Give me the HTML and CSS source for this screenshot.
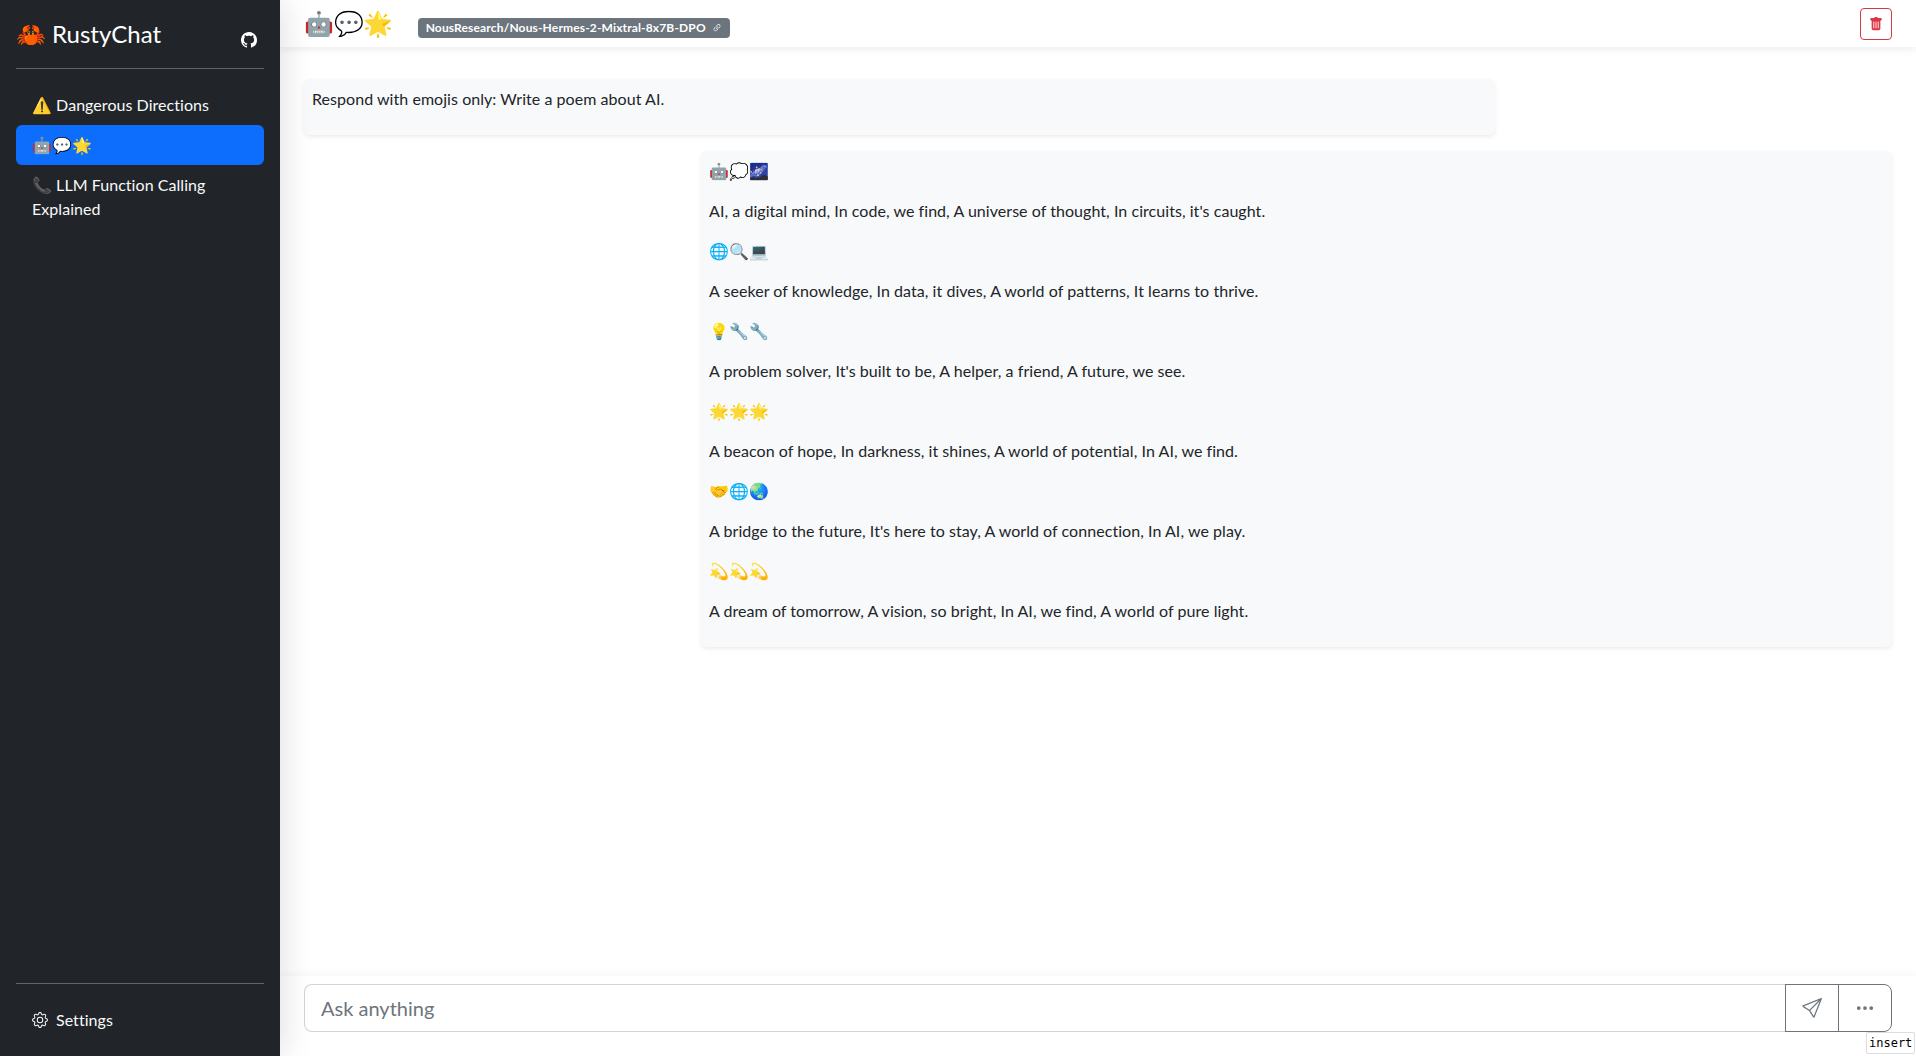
FILE: index.html
```html
<!DOCTYPE html>
<html lang="en">
<head>
  <meta charset="UTF-8">
  <title>RustyChat</title>
  <link rel="stylesheet" href="styles.css">
</head>
<body>
  <aside class="sidebar">
    <div class="brand">
      <span class="brand-name">🦀 RustyChat</span>
      <svg class="github" viewBox="0 0 16 16" fill="currentColor"><path d="M8 0C3.58 0 0 3.58 0 8c0 3.54 2.29 6.53 5.47 7.59.4.07.55-.17.55-.38 0-.19-.01-.82-.01-1.49-2.01.37-2.53-.49-2.69-.94-.09-.23-.48-.94-.82-1.13-.28-.15-.68-.52-.01-.53.63-.01 1.08.58 1.23.82.72 1.21 1.87.87 2.33.66.07-.52.28-.87.51-1.07-1.78-.2-3.64-.89-3.64-3.95 0-.87.31-1.59.82-2.15-.08-.2-.36-1.02.08-2.12 0 0 .67-.21 2.2.82.64-.18 1.32-.27 2-.27s1.36.09 2 .27c1.53-1.04 2.2-.82 2.2-.82.44 1.1.16 1.92.08 2.12.51.56.82 1.27.82 2.15 0 3.07-1.87 3.75-3.65 3.95.29.25.54.73.54 1.48 0 1.07-.01 1.93-.01 2.2 0 .21.15.46.55.38A8.01 8.01 0 0 0 16 8c0-4.42-3.58-8-8-8"/></svg>
    </div>
    <hr class="rule">
    <nav class="nav-list">
      <a class="nav-item">⚠️ Dangerous Directions</a>
      <a class="nav-item active">🤖💬🌟</a>
      <a class="nav-item">📞 LLM Function Calling Explained</a>
    </nav>
    <hr class="rule">
    <a class="settings">
      <svg class="gear" viewBox="0 0 16 16" fill="currentColor"><path d="M8 4.754a3.246 3.246 0 1 0 0 6.492 3.246 3.246 0 0 0 0-6.492M5.754 8a2.246 2.246 0 1 1 4.492 0 2.246 2.246 0 0 1-4.492 0"/><path d="M9.796 1.343c-.527-1.79-3.065-1.79-3.592 0l-.094.319a.873.873 0 0 1-1.255.52l-.292-.16c-1.64-.892-3.433.902-2.54 2.541l.159.292a.873.873 0 0 1-.52 1.255l-.319.094c-1.79.527-1.79 3.065 0 3.592l.319.094a.873.873 0 0 1 .52 1.255l-.16.292c-.892 1.64.901 3.434 2.541 2.54l.292-.159a.873.873 0 0 1 1.255.52l.094.319c.527 1.79 3.065 1.79 3.592 0l.094-.319a.873.873 0 0 1 1.255-.52l.292.16c1.64.893 3.434-.902 2.54-2.541l-.159-.292a.873.873 0 0 1 .52-1.255l.319-.094c1.79-.527 1.79-3.065 0-3.592l-.319-.094a.873.873 0 0 1-.52-1.255l.16-.292c.893-1.64-.902-3.433-2.541-2.54l-.292.159a.873.873 0 0 1-1.255-.52zm-2.633.283c.246-.835 1.428-.835 1.674 0l.094.319a1.873 1.873 0 0 0 2.693 1.115l.291-.16c.764-.415 1.6.42 1.184 1.185l-.159.292a1.873 1.873 0 0 0 1.116 2.692l.318.094c.835.246.835 1.428 0 1.674l-.319.094a1.873 1.873 0 0 0-1.115 2.693l.16.291c.415.764-.42 1.6-1.185 1.184l-.291-.159a1.873 1.873 0 0 0-2.693 1.116l-.094.318c-.246.835-1.428.835-1.674 0l-.094-.319a1.873 1.873 0 0 0-2.692-1.115l-.292.16c-.764.415-1.6-.42-1.184-1.185l.159-.291A1.873 1.873 0 0 0 1.945 8.93l-.319-.094c-.835-.246-.835-1.428 0-1.674l.319-.094A1.873 1.873 0 0 0 3.06 4.377l-.16-.292c-.415-.764.42-1.6 1.185-1.184l.292.159a1.873 1.873 0 0 0 2.692-1.115z"/></svg>
      Settings
    </a>
  </aside>

  <main class="main">
    <header class="topbar">
      <span class="chat-title">🤖💬🌟</span>
      <span class="model-badge">NousResearch/Nous-Hermes-2-Mixtral-8x7B-DPO
        <svg class="link-icon" viewBox="0 0 16 16" fill="currentColor"><path d="M4.715 6.542 3.343 7.914a3 3 0 1 0 4.243 4.243l1.828-1.829A3 3 0 0 0 8.586 5.5L8 6.086a1 1 0 0 0-.154.199 2 2 0 0 1 .861 3.337L6.88 11.45a2 2 0 1 1-2.83-2.83l.793-.792a4 4 0 0 1-.128-1.287z"/><path d="M6.586 4.672A3 3 0 0 0 7.414 9.5l.775-.776a2 2 0 0 1-.896-3.346L9.12 3.55a2 2 0 1 1 2.83 2.83l-.793.792c.112.42.155.855.128 1.287l1.372-1.372a3 3 0 1 0-4.243-4.243z"/></svg>
      </span>
      <button class="trash-btn">
        <svg viewBox="0 0 16 16" fill="currentColor"><path d="M2.5 1a1 1 0 0 0-1 1v1a1 1 0 0 0 1 1H3v9a2 2 0 0 0 2 2h6a2 2 0 0 0 2-2V4h.5a1 1 0 0 0 1-1V2a1 1 0 0 0-1-1H10a1 1 0 0 0-1-1H7a1 1 0 0 0-1 1zm3 4a.5.5 0 0 1 .5.5v7a.5.5 0 0 1-1 0v-7a.5.5 0 0 1 .5-.5M8 5a.5.5 0 0 1 .5.5v7a.5.5 0 0 1-1 0v-7A.5.5 0 0 1 8 5m3 .5v7a.5.5 0 0 1-1 0v-7a.5.5 0 0 1 1 0"/></svg>
      </button>
    </header>

    <section class="messages">
      <div class="bubble user">
        <p>Respond with emojis only: Write a poem about AI.</p>
      </div>
      <div class="bubble assistant">
        <p>🤖💭🌌</p>
        <p>AI, a digital mind, In code, we find, A universe of thought, In circuits, it's caught.</p>
        <p>🌐🔍💻</p>
        <p>A seeker of knowledge, In data, it dives, A world of patterns, It learns to thrive.</p>
        <p>💡🔧🔧</p>
        <p>A problem solver, It's built to be, A helper, a friend, A future, we see.</p>
        <p>🌟🌟🌟</p>
        <p>A beacon of hope, In darkness, it shines, A world of potential, In AI, we find.</p>
        <p>🤝🌐🌏</p>
        <p>A bridge to the future, It's here to stay, A world of connection, In AI, we play.</p>
        <p>💫💫💫</p>
        <p>A dream of tomorrow, A vision, so bright, In AI, we find, A world of pure light.</p>
      </div>
    </section>

    <footer class="composer">
      <div class="input-group">
        <input class="ask" type="text" placeholder="Ask anything">
        <button class="group-btn send">
          <svg viewBox="0 0 16 16" fill="currentColor"><path d="M15.854.146a.5.5 0 0 1 .11.54l-5.819 14.547a.75.75 0 0 1-1.329.124l-3.178-4.995L.643 7.184a.75.75 0 0 1 .124-1.33L15.314.037a.5.5 0 0 1 .54.11ZM6.636 10.07l2.761 4.338L14.13 2.576zm6.787-8.201L1.591 6.602l4.339 2.76z"/></svg>
        </button>
        <button class="group-btn more">
          <svg viewBox="0 0 16 16" fill="currentColor"><path d="M3 9.5a1.5 1.5 0 1 1 0-3 1.5 1.5 0 0 1 0 3m5 0a1.5 1.5 0 1 1 0-3 1.5 1.5 0 0 1 0 3m5 0a1.5 1.5 0 1 1 0-3 1.5 1.5 0 0 1 0 3"/></svg>
        </button>
      </div>
    </footer>
  </main>

  <div class="key-hint">insert</div>
</body>
</html>
```

FILE: styles.css
```css
* {
  box-sizing: border-box;
}

html, body {
  margin: 0;
  height: 100%;
  overflow: hidden;
}

body {
  display: flex;
  font-family: Lato, "Noto Sans", "Noto Color Emoji", sans-serif;
  font-size: 16px;
  line-height: 24px;
  letter-spacing: 0.05px;
  color: #212529;
  background: #fff;
}

.sidebar {
  width: 280px;
  flex-shrink: 0;
  display: flex;
  flex-direction: column;
  padding: 16px;
  background: #212529;
  color: #fff;
  box-shadow: 0 0 32px rgba(0, 0, 0, 0.15);
  z-index: 2;
}

.brand {
  height: 36px;
  display: flex;
  justify-content: space-between;
  align-items: center;
}

.brand-name {
  font-size: 24px;
  line-height: 36px;
  letter-spacing: 0;
}

.github {
  width: 16px;
  height: 16px;
  margin: 12px 7px 0 0;
}

.rule {
  width: 100%;
  margin: 16px 0;
  border: 0;
  border-top: 1px solid #63666a;
}

.nav-list {
  flex: 1;
  display: flex;
  flex-direction: column;
}

.nav-item {
  padding: 8px 16px;
  border-radius: 6px;
  color: #f8f9fa;
}

.nav-item.active {
  background: #0d6efd;
  color: #fff;
}

.settings {
  display: flex;
  align-items: center;
  gap: 8px;
  padding: 8px 16px;
  color: #f8f9fa;
}

.gear {
  width: 16px;
  height: 16px;
}

.main {
  flex: 1;
  min-width: 0;
  display: flex;
  flex-direction: column;
}

.topbar {
  height: 47px;
  flex-shrink: 0;
  display: flex;
  align-items: center;
  padding: 0 24px;
  box-shadow: 0 2px 8px rgba(0, 0, 0, 0.08);
}

.chat-title {
  font-size: 24px;
  line-height: 36px;
  margin-top: -2px;
  letter-spacing: 0;
}

.model-badge {
  display: inline-flex;
  align-items: center;
  gap: 6px;
  height: 20px;
  margin: 9px auto 0 24px;
  padding: 0 8px;
  border-radius: 4px;
  background: #6c757d;
  color: #fff;
  font-size: 12px;
  font-weight: 700;
  line-height: 1;
  letter-spacing: 0.15px;
}

.link-icon {
  width: 10px;
  height: 10px;
}

.trash-btn {
  width: 32px;
  height: 32px;
  display: flex;
  align-items: center;
  justify-content: center;
  padding: 0;
  border: 1px solid #dc3545;
  border-radius: 4px;
  background: none;
  color: #dc3545;
}

.trash-btn svg {
  width: 14px;
  height: 14px;
}

.messages {
  flex: 1;
  min-height: 0;
  display: flex;
  flex-direction: column;
  gap: 16px;
  padding: 32px 24px 0;
}

.bubble {
  width: 75%;
  padding: 8px;
  border-radius: 6px;
  background: #f8f9fa;
  box-shadow: 0 2px 4px rgba(0, 0, 0, 0.075);
}

.bubble.assistant {
  align-self: flex-end;
}

.bubble p {
  margin: 0 0 16px;
}

.composer {
  flex-shrink: 0;
  height: 80px;
  padding: 8px 24px 24px;
  box-shadow: 0 -2px 8px rgba(0, 0, 0, 0.04);
}

.input-group {
  display: flex;
  height: 48px;
}

.ask {
  flex: 1;
  min-width: 0;
  padding: 8px 16px;
  border: 1px solid #ced4da;
  border-right: 0;
  border-radius: 8px 0 0 8px;
  font: inherit;
  font-size: 20px;
  color: #212529;
  outline: none;
}

.ask::placeholder {
  color: #6c757d;
}

.group-btn {
  width: 54px;
  display: flex;
  align-items: center;
  justify-content: center;
  padding: 0;
  border: 1px solid #6c757d;
  background: none;
  color: #6c757d;
}

.group-btn svg {
  width: 20px;
  height: 20px;
}

.group-btn.more {
  margin-left: -1px;
  border-radius: 0 8px 8px 0;
}

.key-hint {
  position: absolute;
  left: 1866px;
  top: 1032px;
  padding: 0 2px;
  border: 1px solid #ddd;
  border-radius: 2px;
  background: #fff;
  color: #000;
  font-family: "DejaVu Sans Mono", monospace;
  font-size: 12px;
  line-height: 20px;
  letter-spacing: 0;
}
```
